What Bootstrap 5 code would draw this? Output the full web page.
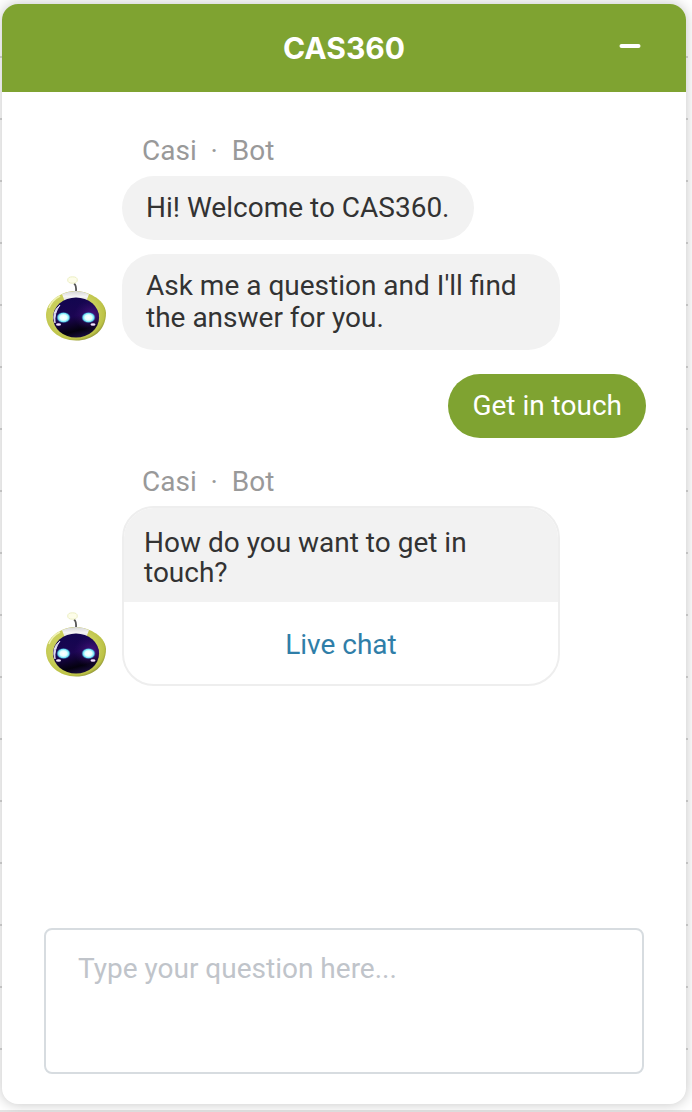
<!DOCTYPE html>
<html lang="en">
<head>
<meta charset="utf-8">
<meta name="viewport" content="width=device-width, initial-scale=1">
<title>CAS360</title>
<link href="https://cdn.jsdelivr.net/npm/bootstrap@5.3.0/dist/css/bootstrap.min.css" rel="stylesheet">
<style>
body{font-family:Roboto,"Liberation Sans",sans-serif;font-size:28px;line-height:32px;color:#333;
 background:repeating-linear-gradient(transparent 0 56px,#d8d8d8 56px 58px,transparent 58px 62px) 0 0/688px 100% no-repeat,#fff}
.page-edge{padding:4px 6px 6px 2px;border-bottom:2px solid #e4e4e4}
.chat{border-radius:16px;box-shadow:0 0 14px rgba(0,0,0,.24)}
.chat-head{background:#7fa331;height:88px;display:grid;grid-template-columns:1fr auto 1fr;padding:0 44px}
.chat-head h1{font:700 30px/32px Inter,sans-serif;grid-column:2}
.chat-log{padding:43px 40px 24px 42px}
.who{color:#999;padding-left:98px;height:41px}
.bubbles{display:flex;flex-direction:column;align-items:flex-start;gap:14px;margin-left:14px}
.bubble{background:#f2f2f2;border-radius:32px;padding:16px 24px;max-width:438px}
.bubble-me{background:#7fa331}
.prompt-card{width:438px;border:2px solid #eee;border-radius:32px;margin-left:14px}
.prompt-card p{background:#f2f2f2;line-height:30px;padding:20px 20px 14px}
.prompt-card .btn{color:#2f7ea8;font-size:28px;height:82px}
.prompt-card .btn:hover{background:#f8f8f8}
.avatar{width:64px;height:68px}
.entry{margin:0 42px 30px}
.entry textarea{font-size:28px;line-height:32px;height:146px;padding:23px 32px;border:2px solid #d7dce0;border-radius:8px;resize:none}
.entry textarea::placeholder{color:#c0c4ca;opacity:1}
</style>
</head>
<body>
<div class="page-edge min-vh-100 d-flex flex-column">
<main class="chat bg-white d-flex flex-column flex-grow-1 overflow-hidden">
<header class="chat-head align-items-center text-white">
<h1 class="m-0">CAS360</h1>
<button type="button" class="btn p-0 border-0 ms-auto text-white" aria-label="Minimize">
<svg class="d-block" width="24" height="24" viewBox="0 0 24 24"><path d="M3.500 10H20.500" stroke="currentColor" stroke-width="4" stroke-linecap="round"/></svg>
</button>
</header>
<section class="chat-log d-flex flex-column flex-grow-1" aria-label="Conversation">
<div class="who">Casi &nbsp;·&nbsp; Bot</div>
<div class="d-flex align-items-end mb-4">
<svg class="avatar flex-shrink-0 mb-2" viewBox="0 0 64 68" role="img" aria-label="Casi">
<defs>
<radialGradient id="shell" cx=".45" cy=".45" r=".58"><stop offset=".7" stop-color="#c9ce5a"/><stop offset=".9" stop-color="#bcc246"/><stop offset="1" stop-color="#8b8f35"/></radialGradient>
<linearGradient id="visor" x1=".2" y1="0" x2=".5" y2="1"><stop offset="0" stop-color="#11064f"/><stop offset=".5" stop-color="#1b0552"/><stop offset=".85" stop-color="#04010f"/><stop offset="1" stop-color="#160b38"/></linearGradient>
<radialGradient id="glow"><stop offset="0" stop-color="#fff"/><stop offset=".5" stop-color="#e4ffff"/><stop offset=".78" stop-color="#6fe3f4"/><stop offset="1" stop-color="#246cb5" stop-opacity=".3"/></radialGradient>
<radialGradient id="haze" cx=".85" cy=".45" r=".4"><stop offset="0" stop-color="#5a178d" stop-opacity=".8"/><stop offset="1" stop-color="#31106a" stop-opacity="0"/></radialGradient>
<linearGradient id="cap" x1="0" y1="0" x2="0" y2="1"><stop offset="0" stop-color="#d5d5d5"/><stop offset=".5" stop-color="#f4f4f4"/><stop offset="1" stop-color="#dcdcdc"/></linearGradient>
</defs>
<g id="bot">
<path d="M30 9.500Q32.500 11 32 18" fill="none" stroke="#555" stroke-width="1.800"/>
<ellipse cx="28.500" cy="6" rx="4.800" ry="3.200" fill="#fdfde9" stroke="#edf0c5"/>
<path d="M31 17C42 17 61 24 62 39C62 56 49 66.500 32 66.500S2 55 2 41C2 27 18 17 31 17Z" fill="url(#shell)"/>
<path d="M18 20Q32 14 45 20L42 28Q32 22 21 28Z" fill="url(#cap)"/>
<ellipse cx="32" cy="43.500" rx="23" ry="20" fill="url(#visor)"/>
<ellipse cx="32" cy="43.500" rx="23" ry="20" fill="url(#haze)"/>
<path d="M16 31Q7 38 11 49Q10 39 16 31Z" fill="#e9e9fa" stroke="#d8d4ef"/>
<path d="M5 34Q8 26 16 22" stroke="#eef0b0" stroke-width="1.500" fill="none"/>
<ellipse cx="19.500" cy="43.500" rx="7" ry="5.500" fill="url(#glow)"/>
<ellipse cx="44.500" cy="43.500" rx="7" ry="5.500" fill="url(#glow)"/>
<ellipse cx="14.500" cy="50.500" rx="2.500" ry="1.300" fill="#f3e3ff"/>
<ellipse cx="49" cy="50.500" rx="2.500" ry="1.300" fill="#f3e3ff"/>
</g>
</svg>
<div class="bubbles">
<div class="bubble">Hi! Welcome to CAS360.</div>
<div class="bubble">Ask me a question and I'll find the answer for you.</div>
</div>
</div>
<div class="bubble bubble-me text-white align-self-end">Get in touch</div>
<div class="who mt-4 pt-1 h-auto pb-2">Casi &nbsp;·&nbsp; Bot</div>
<div class="d-flex align-items-end">
<svg class="avatar flex-shrink-0 mb-2" viewBox="0 0 64 68" role="img" aria-label="Casi"><use href="#bot"/></svg>
<div class="prompt-card overflow-hidden">
<p class="m-0">How do you want to get in touch?</p>
<button type="button" class="btn w-100 p-0 pt-1 border-0 rounded-0">Live chat</button>
</div>
</div>
</section>
<form class="entry">
<textarea class="form-control shadow-none" aria-label="Your question" placeholder="Type your question here..."></textarea>
</form>
</main>
</div>
<script src="https://cdn.jsdelivr.net/npm/bootstrap@5.3.0/dist/js/bootstrap.bundle.min.js"></script>
</body>
</html>
